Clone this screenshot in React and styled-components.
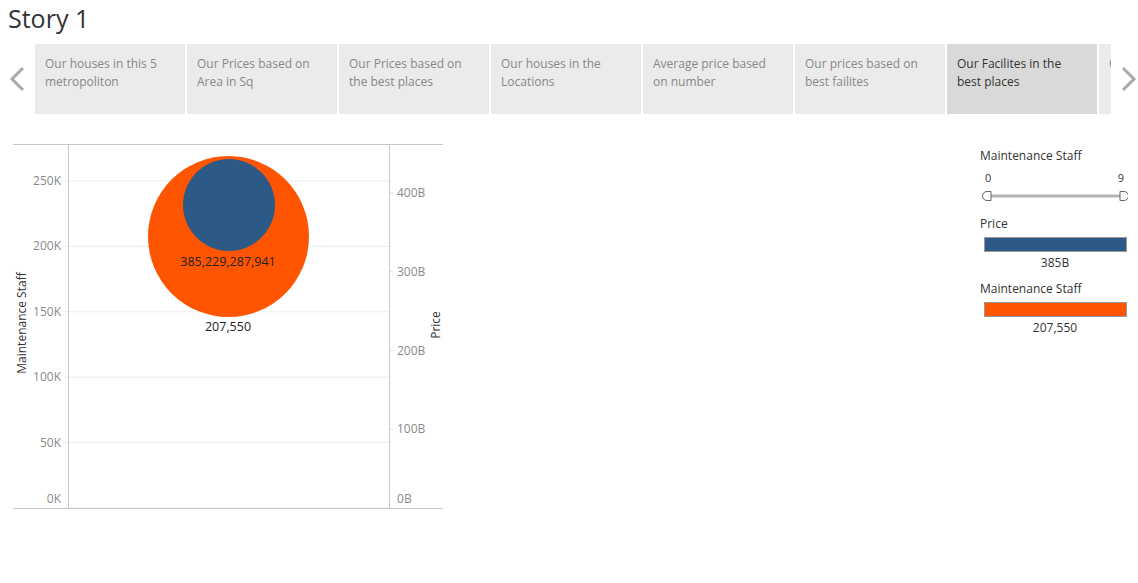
import styled, { createGlobalStyle } from "styled-components";

const GlobalStyle = createGlobalStyle`
  body {
    margin: 0;
    background: #fff;
    font-family: "Open Sans", "Liberation Sans", sans-serif;
    color: #333;
  }
`;

const Page = styled.div`
  width: 1138px;
  height: 583px;
  overflow: hidden;
`;

const Title = styled.h1`
  margin: 0;
  height: 44px;
  padding: 2px 0 0 8px;
  box-sizing: border-box;
  font-size: 25px;
  font-weight: 400;
  line-height: 32px;
  color: #333;
`;

const StoryNav = styled.div`
  display: flex;
  height: 70px;
`;

const Arrow = styled.div`
  flex: 0 0 ${p => p.$w}px;
  display: flex;
  align-items: center;
  justify-content: ${p => p.$side === "left" ? "flex-start" : "flex-end"};
  padding: ${p => p.$side === "left" ? "0 0 0 9px" : "0 1px 0 0"};
  box-sizing: border-box;
`;

const Tabs = styled.div`
  flex: 0 0 1076px;
  display: flex;
  gap: 2px;
  overflow: hidden;
`;

const Tab = styled.div`
  flex: 0 0 150px;
  box-sizing: border-box;
  padding: 11px 10px 0 10px;
  background: ${p => p.$active ? "#d9d9d9" : "#ebebeb"};
  color: ${p => p.$active ? "#333" : "#888"};
  font-size: 12px;
  line-height: 18px;
`;

const Body = styled.div`
  display: flex;
  justify-content: space-between;
  margin-top: 27px;
`;

const Legend = styled.div`
  width: 148px;
  margin-right: 10px;
  padding-top: 7px;
  display: flex;
  flex-direction: column;
`;

const LegendTitle = styled.div`
  font-size: 12px;
  line-height: 16px;
  color: #333;
  margin-top: ${p => p.$gap || 0}px;
`;

const SliderLabels = styled.div`
  display: flex;
  justify-content: space-between;
  padding: 6px 4px 0 5px;
  font-size: 11px;
  line-height: 16px;
  color: #333;
`;

const ColorBar = styled.div`
  margin: 5px 1px 0 4px;
  height: 15px;
  background: ${p => p.$color};
  border: 1px solid #999;
  box-sizing: border-box;
`;

const BarValue = styled.div`
  margin-top: 3px;
  text-align: center;
  font-size: 12px;
  line-height: 16px;
  color: #333;
  padding-left: 2px;
`;

const tabs = [
  "Our houses in this 5 metropoliton",
  "Our Prices based on Area in Sq",
  "Our Prices based on the best places",
  "Our houses in the Locations",
  "Average price based on number",
  "Our prices based on best failites",
  "Our Facilites in the best places",
  "Our houses in the best"
];

const Chevron = ({ dir }) => (
  <svg width="16" height="26" viewBox="0 0 16 26">
    <path
      d={dir === "left" ? "M14 2 L3 13 L14 24" : "M2 2 L13 13 L2 24"}
      fill="none"
      stroke="#aaa"
      strokeWidth="3"
    />
  </svg>
);

const leftTicks = [0, 50, 100, 150, 200, 250];
const rightTicks = [0, 100, 200, 300, 400];
const yLeft = v => 367 - (v / 50) * 65.4;
const yRight = v => 367 - (v / 100) * 78.75;
// the zero labels sit just above the baseline, as in the source view
const labelY = (y, v) => (v === 0 ? y - 5 : y + 4);

const Chart = () => (
  <svg width="450" height="372" style={{ display: "block" }}>
    {leftTicks.map(t => (
      <g key={t}>
        <line x1="63" x2="389" y1={yLeft(t)} y2={yLeft(t)} stroke="#ededed" />
        <text x="61" y={labelY(yLeft(t), t)} textAnchor="end" fontSize="12" fill="#8a8a8a"
          fontFamily="Open Sans, sans-serif">{t}K</text>
      </g>
    ))}
    {rightTicks.map(t => (
      <g key={t}>
        <line x1="389" x2="393" y1={yRight(t)} y2={yRight(t)} stroke="#e0e0e0" />
        <text x="397" y={labelY(yRight(t), t)} fontSize="12" fill="#8a8a8a"
          fontFamily="Open Sans, sans-serif">{t}B</text>
      </g>
    ))}
    <line x1="13" x2="443" y1="3.5" y2="3.5" stroke="#c8c8c8" />
    <line x1="13" x2="443" y1="367.5" y2="367.5" stroke="#c8c8c8" />
    <line x1="68.5" x2="68.5" y1="3" y2="367" stroke="#c8c8c8" />
    <line x1="389.5" x2="389.5" y1="3" y2="367" stroke="#c8c8c8" />

    <circle cx="228.5" cy="95.5" r="80.5" fill="#ff5500" />
    <circle cx="229" cy="64" r="46" fill="#2c5985" />
    <text x="228" y="125" textAnchor="middle" fontSize="12.5" fill="#222"
      fontFamily="Open Sans, sans-serif">385,229,287,941</text>
    <text x="228" y="190" textAnchor="middle" fontSize="12.5" fill="#222"
      fontFamily="Open Sans, sans-serif">207,550</text>

    <text transform="translate(26 182) rotate(-90)" textAnchor="middle" fontSize="12" fill="#333"
      fontFamily="Open Sans, sans-serif">Maintenance Staff</text>
    <text transform="translate(440 184) rotate(-90)" textAnchor="middle" fontSize="12" fill="#333"
      fontFamily="Open Sans, sans-serif">Price</text>
  </svg>
);

const Slider = () => (
  <svg width="148" height="14" style={{ display: "block", marginTop: 3 }}>
    <rect x="8" y="5.5" width="134" height="3" fill="#b4b4b4" />
    <path d="M11 2.5 H7 A4.5 4.5 0 0 0 7 11.5 H11 Z" fill="#fff" stroke="#666" />
    <path d="M140 2.5 H144 A4.5 4.5 0 0 1 144 11.5 H140 Z" fill="#fff" stroke="#666" />
  </svg>
);

export default function App() {
  return (
    <Page>
      <GlobalStyle />
      <Title>Story 1</Title>
      <StoryNav>
        <Arrow $side="left" $w={35}><Chevron dir="left" /></Arrow>
        <Tabs>
          {tabs.map((t, i) => (
            <Tab key={t} $active={i === 6}>{t}</Tab>
          ))}
        </Tabs>
        <Arrow $side="right" $w={27}><Chevron dir="right" /></Arrow>
      </StoryNav>
      <Body>
        <Chart />
        <Legend>
          <LegendTitle>Maintenance Staff</LegendTitle>
          <SliderLabels><span>0</span><span>9</span></SliderLabels>
          <Slider />
          <LegendTitle $gap={13}>Price</LegendTitle>
          <ColorBar $color="#2c5985" />
          <BarValue>385B</BarValue>
          <LegendTitle $gap={10}>Maintenance Staff</LegendTitle>
          <ColorBar $color="#ff5500" />
          <BarValue>207,550</BarValue>
        </Legend>
      </Body>
    </Page>
  );
}
